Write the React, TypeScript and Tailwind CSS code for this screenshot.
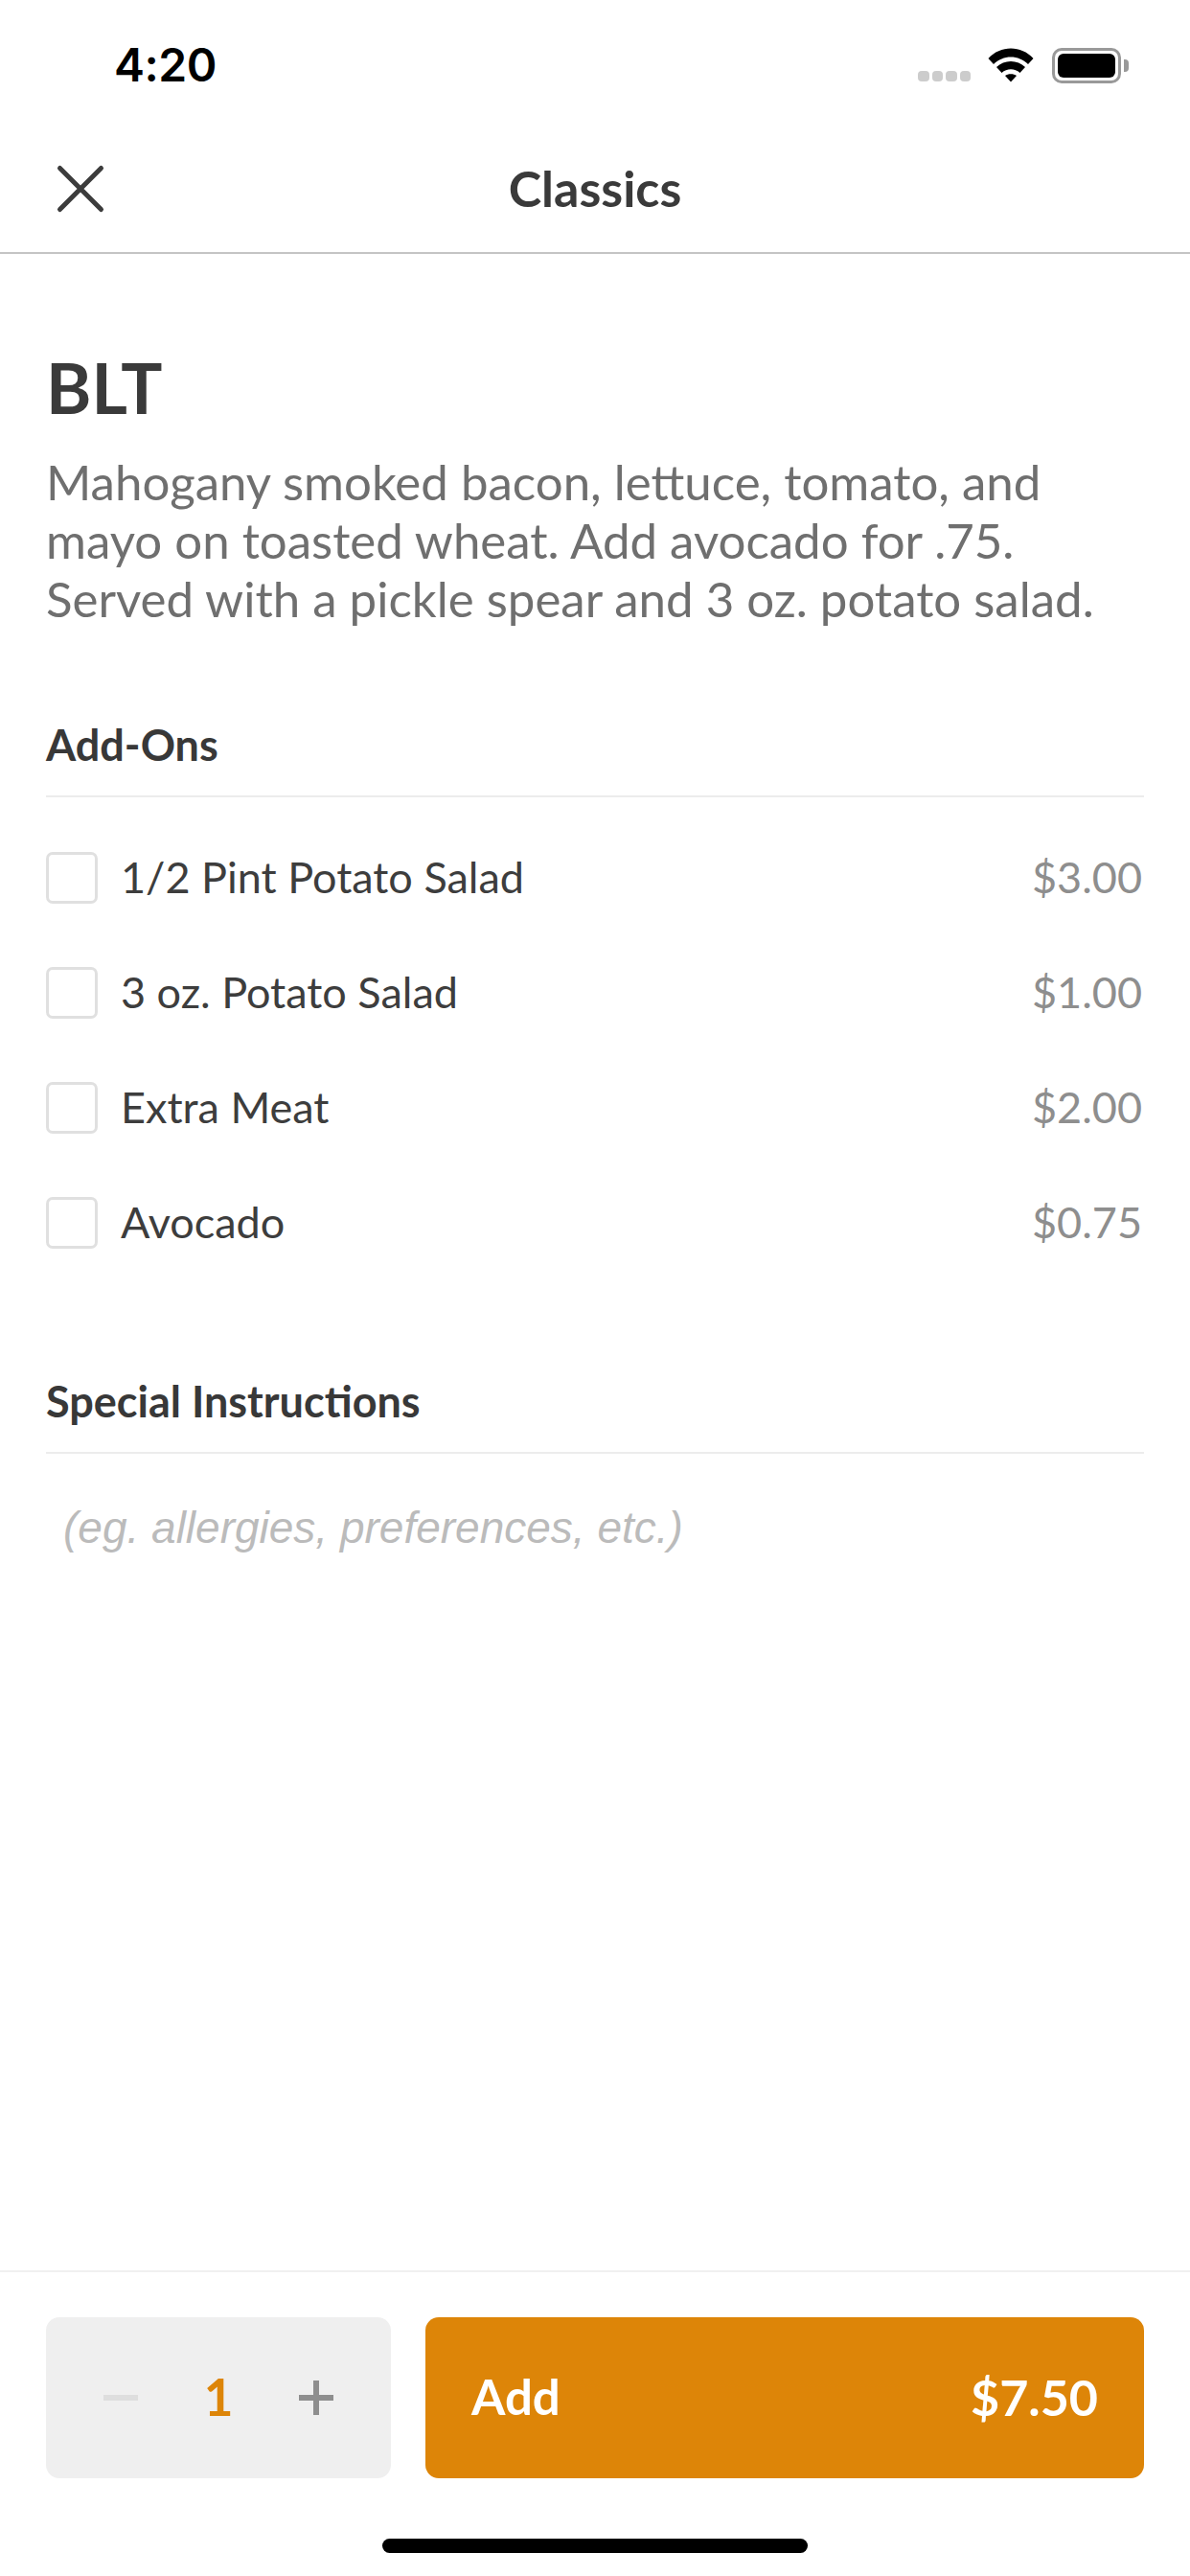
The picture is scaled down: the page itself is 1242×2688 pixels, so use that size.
import React from "react";

const addOns = [
  { name: "1/2 Pint Potato Salad", price: "$3.00" },
  { name: "3 oz. Potato Salad", price: "$1.00" },
  { name: "Extra Meat", price: "$2.00" },
  { name: "Avocado", price: "$0.75" },
];

function StatusBar() {
  return (
    <div className="h-[136px] flex items-center justify-between pl-[119px] pr-[72px] text-black shrink-0">
      <span className="text-[48px] font-semibold tracking-[-0.5px] font-['Inter',sans-serif]">4:20</span>
      <div className="flex items-center">
        <div className="flex gap-[3px] mt-[23px] mr-[18px]">
          <span className="w-[11.5px] h-[11px] rounded-[4px] bg-[#cccccc]" />
          <span className="w-[11.5px] h-[11px] rounded-[4px] bg-[#cccccc]" />
          <span className="w-[11.5px] h-[11px] rounded-[4px] bg-[#cccccc]" />
          <span className="w-[11.5px] h-[11px] rounded-[4px] bg-[#cccccc]" />
        </div>
        <svg width="48" height="36" viewBox="0 0 48 36" className="mr-[19px]">
          <path d="M0.5 11 C13 -3 35 -3 47.5 11 L42 17 C32 7 16 7 6 17 Z" fill="#000" />
          <path d="M9 20 C17 12 31 12 39 20 L33.5 26 C28 21 20 21 14.5 26 Z" fill="#000" />
          <path d="M18 29 C21 26.5 27 26.5 30 29 L24 35.5 Z" fill="#000" />
        </svg>
        <div className="relative w-[72px] h-[37px] rounded-[10px] border-[3px] border-[#999999] p-[3px]">
          <div className="w-full h-full rounded-[6px] bg-black" />
          <span className="absolute right-[-11px] top-[9px] w-[5px] h-[13px] bg-[#999999] rounded-r-[4px]" />
        </div>
      </div>
    </div>
  );
}

function Header() {
  return (
    <div className="relative h-[129px] flex items-center justify-center border-b-2 border-[#c4c4c4] shrink-0">
      <svg width="54" height="54" viewBox="0 0 54 54" className="absolute left-[57px] top-[34px]" fill="none" stroke="#3c3c3c" strokeWidth="5" strokeLinecap="round">
        <path d="M5.5 5.5 L48.5 48.5 M48.5 5.5 L5.5 48.5" />
      </svg>
      <span className="text-[52px] font-bold text-[#3a3a3a] mb-[8px]">Classics</span>
    </div>
  );
}

function SectionTitle({ children }: { children: React.ReactNode }) {
  return (
    <div className="h-[77px] border-b-2 border-[#ececec] text-[45px] font-bold leading-[44px] text-[#383838]">
      {children}
    </div>
  );
}

function AddOnRow({ name, price }: { name: string; price: string }) {
  return (
    <div className="h-[120px] flex items-center justify-between">
      <div className="flex items-center gap-[24px]">
        <span className="w-[54px] h-[54px] rounded-[7px] border-[3px] border-[#e0e0e0] bg-white" />
        <span className="text-[45px] text-[#3d3d3d]">{name}</span>
      </div>
      <span className="text-[45px] text-[#8e8e8e] mr-[2px]">{price}</span>
    </div>
  );
}

function Footer() {
  return (
    <div className="border-t-2 border-[#f0f0f0] shrink-0">
      <div className="flex gap-[36px] px-[48px] pt-[47px]">
        <div className="w-[360px] h-[168px] rounded-[14px] bg-[#efefef] flex items-center justify-between px-[60px]">
          <span className="w-[36px] h-[6px] bg-[#dedede]" />
          <span className="text-[53px] font-bold text-[#dd8508] leading-none mb-[3px]">1</span>
          <span className="relative w-[36px] h-[36px] flex items-center justify-center">
            <span className="absolute w-[36px] h-[6px] bg-[#8e8e8e]" />
            <span className="absolute w-[6px] h-[36px] bg-[#8e8e8e]" />
          </span>
        </div>
        <div className="flex-1 h-[168px] rounded-[14px] bg-[#dd8508] flex items-center justify-between px-[48px] text-white text-[51px] font-bold">
          <span className="mb-[2px]">Add</span>
          <span className="text-[52px] mb-[2px]">$7.50</span>
        </div>
      </div>
      <div className="flex justify-center pt-[63px] pb-[24px]">
        <span className="w-[444px] h-[15px] rounded-full bg-black" />
      </div>
    </div>
  );
}

export default function App() {
  return (
    <div className="w-[1242px] h-[2688px] bg-white flex flex-col font-['Lato',sans-serif] overflow-hidden">
      <StatusBar />
      <Header />
      <main className="flex-1 px-[48px]">
        <h1 className="mt-[94px] text-[72px] leading-[90px] font-bold text-[#3a3a3a]">BLT</h1>
        <p className="mt-[23px] text-[51px] leading-[61px] text-[#6f6f6f]">
          Mahogany smoked bacon, lettuce, tomato, and
          <br />
          mayo on toasted wheat. Add avocado for .75.
          <br />
          Served with a pickle spear and 3 oz. potato salad.
        </p>
        <section className="mt-[100px]">
          <SectionTitle>Add-Ons</SectionTitle>
          <div className="mt-[24px]">
            {addOns.map((a) => (
              <AddOnRow key={a.name} name={a.name} price={a.price} />
            ))}
          </div>
        </section>
        <section className="mt-[104px]">
          <SectionTitle>Special Instructions</SectionTitle>
          <p className="mt-[52px] pl-[18px] text-[46px] leading-[50px] italic text-[#bbbbbb] font-['Liberation_Sans',sans-serif]">
            (eg. allergies, preferences, etc.)
          </p>
        </section>
      </main>
      <Footer />
    </div>
  );
}
